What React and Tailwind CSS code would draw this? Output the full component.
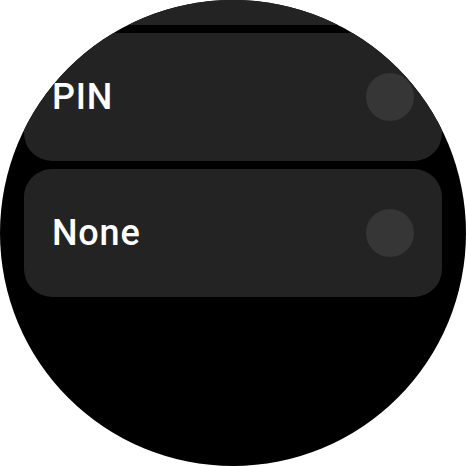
import React from 'react'

const options = [
  { id: 'pattern', label: '' },
  { id: 'pin', label: 'PIN' },
  { id: 'none', label: 'None' },
]

function OptionRow({ label }) {
  return (
    <div className="h-[128px] w-[418px] shrink-0 rounded-[28px] bg-[#232323] flex items-center justify-between pl-[28px] pr-[28px]">
      <span
        className="text-[36px] font-medium text-white tracking-[0.8px] leading-none"
        style={{ fontFamily: 'Roboto, "Noto Sans", sans-serif' }}
      >
        {label}
      </span>
      <div className="w-12 h-12 rounded-full bg-[#363636]" />
    </div>
  )
}

export default function App() {
  return (
    <div className="w-[466px] h-[466px] bg-white">
      <div className="w-[466px] h-[466px] rounded-full bg-black overflow-hidden flex flex-col items-center gap-2">
        <div className="-mt-[103px] flex flex-col items-center gap-2">
          {options.map(o => (
            <OptionRow key={o.id} label={o.label} />
          ))}
        </div>
      </div>
    </div>
  )
}
